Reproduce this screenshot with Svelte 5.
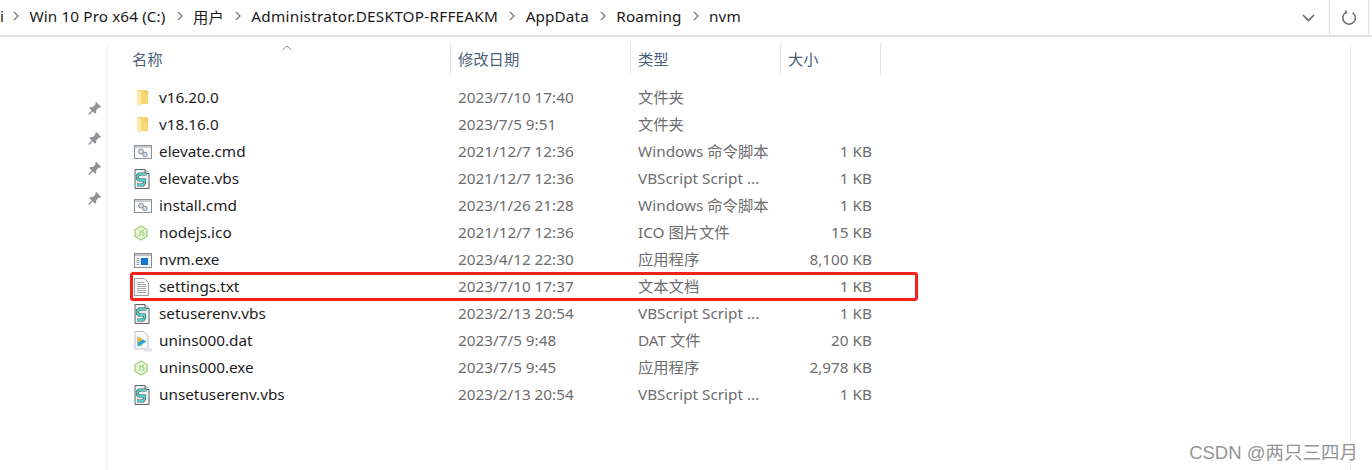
<script>
    const crumbs = ['Win 10 Pro x64 (C:)', '用户', 'Administrator.DESKTOP-RFFEAKM', 'AppData', 'Roaming', 'nvm'];

    const files = [
        { name: 'v16.20.0', date: '2023/7/10 17:40', type: '文件夹', size: '', icon: 'folder' },
        { name: 'v18.16.0', date: '2023/7/5 9:51', type: '文件夹', size: '', icon: 'folder' },
        { name: 'elevate.cmd', date: '2021/12/7 12:36', type: 'Windows 命令脚本', size: '1 KB', icon: 'cmd' },
        { name: 'elevate.vbs', date: '2021/12/7 12:36', type: 'VBScript Script ...', size: '1 KB', icon: 'vbs' },
        { name: 'install.cmd', date: '2023/1/26 21:28', type: 'Windows 命令脚本', size: '1 KB', icon: 'cmd' },
        { name: 'nodejs.ico', date: '2021/12/7 12:36', type: 'ICO 图片文件', size: '15 KB', icon: 'node' },
        { name: 'nvm.exe', date: '2023/4/12 22:30', type: '应用程序', size: '8,100 KB', icon: 'exe' },
        { name: 'settings.txt', date: '2023/7/10 17:37', type: '文本文档', size: '1 KB', icon: 'txt', marked: true },
        { name: 'setuserenv.vbs', date: '2023/2/13 20:54', type: 'VBScript Script ...', size: '1 KB', icon: 'vbs' },
        { name: 'unins000.dat', date: '2023/7/5 9:48', type: 'DAT 文件', size: '20 KB', icon: 'dat' },
        { name: 'unins000.exe', date: '2023/7/5 9:45', type: '应用程序', size: '2,978 KB', icon: 'node' },
        { name: 'unsetuserenv.vbs', date: '2023/2/13 20:54', type: 'VBScript Script ...', size: '1 KB', icon: 'vbs' }
    ];

    const pins = [0, 1, 2, 3];
</script>

<div class="window">
    <div class="address">
        <div class="crumbs">
            <span class="cut">i</span>
            {#each crumbs as crumb}
                <svg class="sep" width="8" height="10" viewBox="0 0 8 10"><path d="M2 1l4 4-4 4" fill="none" stroke="#808080" stroke-width="1.4" /></svg>
                <span class="crumb" class:long={crumb.length > 20}>{crumb}</span>
            {/each}
        </div>
        <div class="drop">
            <svg width="13" height="8" viewBox="0 0 13 8"><path d="M1 1l5.500 5.500L12 1" fill="none" stroke="#6b6b6b" stroke-width="1.700" /></svg>
        </div>
        <div class="refresh">
            <svg width="16" height="16" viewBox="0 0 16 16"><path d="M5 2.400A6.300 6.300 0 1 0 11.500 2.600M4.400 0.500L5.400 2.700L3 3.800" fill="none" stroke="#6b6b6b" stroke-width="1.500" /></svg>
        </div>
    </div>

    <div class="body">
        <aside class="side">
            {#each pins as p}
                <svg class="pin" width="15" height="15" viewBox="0 0 14 14">
                    <path d="M8.500 0.800l4.700 4.700-1.300 0.800-1 0-2.300 2.300 0 2.400-1 1-2.300-2.300-3.300 3.300-0.900-0.900 3.300-3.300-2.300-2.300 1-1 2.400 0 2.300-2.300 0-1z" fill="#8f9398" />
                </svg>
            {/each}
        </aside>

        <main class="list">
            <div class="head">
                <svg class="sort" width="10" height="6" viewBox="0 0 10 6"><path d="M0.500 5L5 1l4.500 4" fill="none" stroke="#8a8a8a" /></svg>
                <div class="col c-name">名称</div>
                <div class="col c-date">修改日期</div>
                <div class="col c-type">类型</div>
                <div class="col c-size">大小</div>
            </div>

            <div class="rows">
                {#each files as f}
                    <div class="row">
                        {#if f.marked}<div class="mark"></div>{/if}
                        <div class="c-name name">
                            <span class="icon">
                                {#if f.icon === 'folder'}
                                    <svg width="16" height="18" viewBox="0 0 16 18">
                                        <path d="M3 1h8l3 1v13H7v2l-4-1.500z" fill="#f8d772" />
                                        <path d="M3 2l4 1v14l-4-1.500z" fill="#fbe9ae" />
                                        <path d="M11 1l3 1v3h-3z" fill="#f3c95f" />
                                    </svg>
                                {:else if f.icon === 'cmd'}
                                    <svg width="18" height="16" viewBox="0 0 18 16">
                                        <rect x="0.500" y="1.500" width="17" height="13" fill="#fff" stroke="#8a8f94" />
                                        <rect x="1" y="2" width="16" height="2" fill="#c9ccd0" />
                                        <circle cx="7" cy="7.500" r="2.500" fill="#d7dadd" stroke="#8e9398" />
                                        <circle cx="11" cy="10.500" r="2.300" fill="#cfdbe8" stroke="#7f8f9f" />
                                    </svg>
                                {:else if f.icon === 'vbs'}
                                    <svg width="16" height="20" viewBox="0 0 16 20">
                                        <path d="M1 0.500h10l4 4v15H1z" fill="#f2f3f4" stroke="#5f6368" />
                                        <path d="M11 0.500v4h4" fill="#dfe2e5" stroke="#5f6368" />
                                        <path d="M12.500 5H5.500L3.500 6.500v3L5 11H10.500V14L9 16H3" fill="none" stroke="#4a5258" stroke-width="3.200" />
                                        <path d="M12.500 5H5.500L3.500 6.500v3L5 11H10.500V14L9 16H3" fill="none" stroke="#4fd0c8" stroke-width="2" />
                                    </svg>
                                {:else if f.icon === 'node'}
                                    <svg width="14" height="16" viewBox="0 0 14 16">
                                        <path d="M7 1l6 3.500v7L7 15l-6-3.500v-7z" fill="#e6f4d8" stroke="#a3d07e" stroke-width="1.300" />
                                        <path d="M6.200 5v5l-1.700.5M10 5.500H8.300v2.200H10v2.400H8" fill="none" stroke="#9ccb75" />
                                    </svg>
                                {:else if f.icon === 'exe'}
                                    <svg width="18" height="15" viewBox="0 0 18 15">
                                        <rect x="0.500" y="0.500" width="17" height="14" fill="#f5f6f7" stroke="#888d92" />
                                        <rect x="1" y="1" width="16" height="2" fill="#bcc2c8" />
                                        <rect x="7" y="5" width="7" height="7" fill="#0f78d4" />
                                        <path d="M2.500 5.500h3M2.500 7.500h3M2.500 9.500h3M2.500 11.500h3" stroke="#9aa5b0" />
                                    </svg>
                                {:else if f.icon === 'txt'}
                                    <svg width="15" height="18" viewBox="0 0 15 18">
                                        <path d="M0.500 0.500h10l4 4v13H0.500z" fill="#fafafa" stroke="#9a9ea3" />
                                        <path d="M3 4.500h7M3 6.500h9M3 8.500h9M3 10.500h9M3 12.500h9M3 14.500h9" stroke="#a9adb2" />
                                    </svg>
                                {:else if f.icon === 'dat'}
                                    <svg width="19" height="21" viewBox="0 0 19 21">
                                        <path d="M1 0.500h9l4 4V18H1z" fill="#f7f8f9" stroke="#bcc0c5" />
                                        <path d="M3.500 5.500l9 5-9 5z" fill="#2a9fe0" />
                                        <path d="M3.500 5.500l5.500 3-5.500 3.500z" fill="#f4b632" />
                                        <path d="M3.500 15.500l3.500-2.500 2.300 1z" fill="#5cb85c" />
                                        <path d="M10 17.500h8v3h-8z" fill="#dfe3e8" />
                                    </svg>
                                {/if}
                            </span>
                            <span>{f.name}</span>
                        </div>
                        <div class="c-date">{f.date}</div>
                        <div class="c-type">{f.type}</div>
                        <div class="c-size size">{f.size}</div>
                    </div>
                {/each}
            </div>
            <div class="watermark">CSDN @两只三四月</div>
        </main>
    </div>
</div>

<style>
    :global(body) {
        margin: 0;
        background: #fff;
    }

    .window {
        width: 1372px;
        height: 470px;
        overflow: hidden;
        font-family: "Noto Sans", "Noto Sans CJK SC", sans-serif;
        font-size: 15.3px;
        color: #1e1e1e;
        display: flex;
        flex-direction: column;
    }

    .address {
        height: 35px;
        flex: none;
        display: flex;
        align-items: center;
        border-bottom: 2px solid #e3e3e3;
    }

    .crumbs {
        flex: 1;
        display: flex;
        align-items: center;
        gap: 8.250px;
        white-space: nowrap;
        color: #1a1a1a;
        padding-bottom: 3px;
        letter-spacing: 0.1px;
    }

    .long {
        letter-spacing: 0.240px;
    }

    .cut {
        width: 2px;
    }

    .sep {
        margin-left: 2px;
        margin-right: 1px;
    }

    .drop {
        width: 40px;
        height: 100%;
        display: flex;
        align-items: center;
        justify-content: center;
        box-sizing: border-box;
        padding-right: 2px;
    }

    .refresh {
        width: 38px;
        height: 100%;
        margin-right: 3px;
        display: flex;
        align-items: center;
        justify-content: center;
        border-left: 1px solid #dcdcdc;
        border-right: 1px solid #dcdcdc;
    }

    .body {
        flex: 1;
        display: flex;
        min-height: 0;
    }

    .side {
        width: 108px;
        flex: none;
        box-sizing: border-box;
        border-right: 1px solid #f0f0f0;
        margin-top: 5px;
        padding: 59px 5px 0 0;
        display: flex;
        flex-direction: column;
        align-items: flex-end;
        gap: 15px;
    }

    .list {
        width: 1242px;
        flex: none;
        margin-top: 6px;
        position: relative;
        border-right: 1px solid #f0f0f0;
    }

    .head {
        height: 32px;
        display: flex;
        position: relative;
        color: #4c607a;
    }

    .sort {
        position: absolute;
        left: 174px;
        top: 2px;
    }

    .col {
        box-sizing: border-box;
        display: flex;
        align-items: center;
        border-right: 1px solid #e5e5e5;
        padding-bottom: 2px;
    }

    .c-name {
        width: 343px;
        flex: none;
        box-sizing: border-box;
        padding-left: 24px;
    }

    .c-date {
        width: 180px;
        flex: none;
        box-sizing: border-box;
        padding-left: 7px;
        color: #6d6d6d;
    }

    .c-type {
        width: 150px;
        flex: none;
        box-sizing: border-box;
        padding-left: 7px;
        color: #6d6d6d;
        white-space: nowrap;
    }

    .c-size {
        width: 100px;
        flex: none;
        box-sizing: border-box;
        padding-left: 7px;
        color: #6d6d6d;
    }

    .head .c-date, .head .c-type, .head .c-size {
        color: #4c607a;
    }

    .rows {
        margin-top: 10px;
    }

    .row {
        height: 27px;
        display: flex;
        align-items: center;
        position: relative;
        white-space: nowrap;
    }

    .row > div {
        line-height: 25px;
        padding-bottom: 2px;
    }

    .name {
        display: flex;
        align-items: center;
        color: #1c1c1c;
    }

    .icon {
        width: 27px;
        height: 20px;
        flex: none;
        display: flex;
        align-items: center;
        padding-left: 2px;
        box-sizing: border-box;
        margin-top: 1px;
    }

    .size {
        text-align: right;
        padding-right: 9px;
    }

    .row > .mark {
        position: absolute;
        left: 22px;
        top: -2px;
        width: 788px;
        height: 29px;
        box-sizing: border-box;
        border: 3px solid #f5211c;
        border-radius: 3px;
        padding: 0;
    }

    .watermark {
        position: absolute;
        right: -8px;
        bottom: 6px;
        font-family: "Liberation Sans", "Noto Sans CJK SC", sans-serif;
        font-size: 18.5px;
        color: #949494;
        white-space: nowrap;
    }
</style>
